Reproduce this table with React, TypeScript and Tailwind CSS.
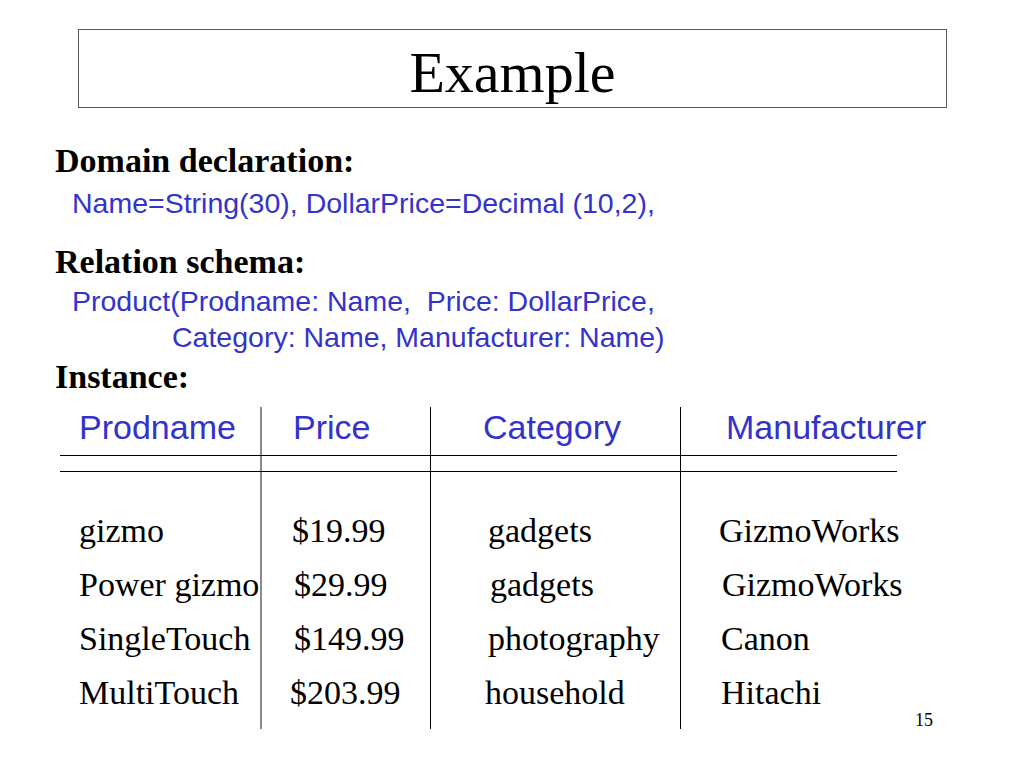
import React from "react";

const serif = "font-['Liberation_Serif','Times_New_Roman',serif]";
const sans = "font-['Liberation_Sans',Arial,sans-serif]";

type Cell = { text: string; pad: string };

const header: Cell[] = [
  { text: "Prodname", pad: "pl-[19px]" },
  { text: "Price", pad: "pl-[31px]" },
  { text: "Category", pad: "pl-[52px]" },
  { text: "Manufacturer", pad: "pl-[45px]" },
];

const rows: Cell[][] = [
  [
    { text: "gizmo", pad: "pl-[19px]" },
    { text: "$19.99", pad: "pl-[30px]" },
    { text: "gadgets", pad: "pl-[57px]" },
    { text: "GizmoWorks", pad: "pl-[38px]" },
  ],
  [
    { text: "Power gizmo", pad: "pl-[19px]" },
    { text: "$29.99", pad: "pl-[32px]" },
    { text: "gadgets", pad: "pl-[59px]" },
    { text: "GizmoWorks", pad: "pl-[41px]" },
  ],
  [
    { text: "SingleTouch", pad: "pl-[19px]" },
    { text: "$149.99", pad: "pl-[32px]" },
    { text: "photography", pad: "pl-[57px]" },
    { text: "Canon", pad: "pl-[40px]" },
  ],
  [
    { text: "MultiTouch", pad: "pl-[19px]" },
    { text: "$203.99", pad: "pl-[28px]" },
    { text: "household", pad: "pl-[54px]" },
    { text: "Hitachi", pad: "pl-[40px]" },
  ],
];

// column widths and the rule on the right of each one
const cols = [
  "w-[202px] border-r-2 border-[#8a8a8a]",
  "w-[169px] border-r border-black",
  "w-[250px] border-r border-black",
  "w-[216px]",
];

const Row: React.FC<{ cells: Cell[]; className: string; cellClass: string }> = ({
  cells,
  className,
  cellClass,
}) => (
  <div className={`flex ${className}`}>
    {cells.map((c, i) => (
      <div key={i} className={`${cols[i]} ${c.pad} ${cellClass} whitespace-nowrap shrink-0`}>
        {c.text}
      </div>
    ))}
  </div>
);

const empty: Cell[] = cols.map(() => ({ text: "", pad: "" }));

export default function App() {
  return (
    <div className="w-[1024px] h-[768px] bg-white overflow-hidden relative pt-[29px]">
      <div className="ml-[78px] w-[869px] h-[79px] border border-[#5a5a5a] flex justify-center">
        <h1 className={`${serif} text-[58px] leading-[58px] pt-[14px] text-black`}>Example</h1>
      </div>

      <div className="pl-[55px]">
        <div className={`${serif} font-bold text-[34px] leading-[40px] mt-[33px] text-black`}>
          Domain declaration:
        </div>
        <div className={`${sans} text-[28.5px] leading-[40px] mt-[2px] pl-[17px] text-[#3333cc]`}>
          Name=String(30), DollarPrice=Decimal (10,2),
        </div>
        <div className={`${serif} font-bold text-[34px] leading-[40px] mt-[19px] text-black`}>
          Relation schema:
        </div>
        <div className={`${sans} text-[28.5px] leading-[36px] mt-[1px] text-[#3333cc] whitespace-pre`}>
          <div className="pl-[17px]">Product(Prodname: Name,  Price: DollarPrice,</div>
          <div className="pl-[117px]">Category: Name, Manufacturer: Name)</div>
        </div>
        <div className={`${serif} font-bold text-[34px] leading-[40px] mt-[2px] text-black`}>
          Instance:
        </div>
      </div>

      <div className="ml-[60px] mt-[10px] w-[837px]">
        <Row
          cells={header}
          className="h-[48px]"
          cellClass={`${sans} text-[34px] leading-[40px] text-[#3333cc]`}
        />
        <Row cells={empty} className="h-[17px] border-y border-black" cellClass="" />
        <Row cells={empty} className="h-[32px]" cellClass="" />
        {rows.map((r, i) => (
          <Row
            key={i}
            cells={r}
            className="h-[54px]"
            cellClass={`${serif} text-[34px] leading-[54px] text-black`}
          />
        ))}
        <Row cells={empty} className="h-[9px]" cellClass="" />
      </div>

      <div className={`${serif} absolute left-[915px] top-[707px] text-[18px] text-black`}>15</div>
    </div>
  );
}
